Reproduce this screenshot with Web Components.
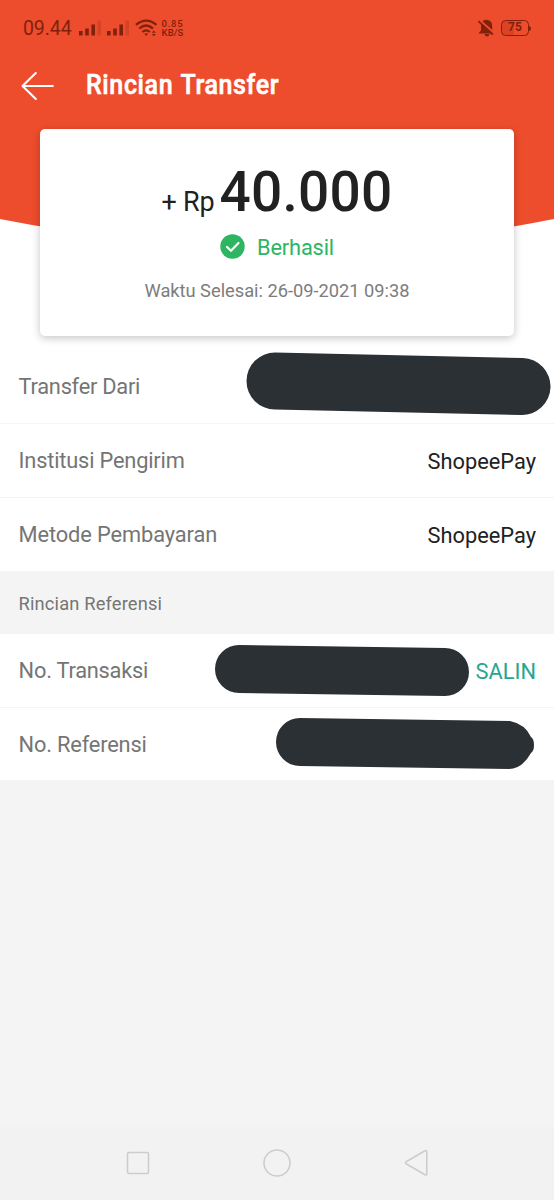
<!DOCTYPE html>
<html lang="id">
<head>
<meta charset="utf-8">
<title>Rincian Transfer</title>
<style>
body{margin:0;background:#f4f4f4;font-family:Roboto,"Noto Sans",sans-serif}
</style>
</head>
<body>
<transfer-page></transfer-page>
<script>
const define = (name, html, after) => customElements.define(name, class extends HTMLElement {
  constructor(){
    super();
    const t = document.createElement('template');
    t.innerHTML = html;
    this.attachShadow({mode:'open'}).append(t.content.cloneNode(true));
  }
  connectedCallback(){ if (after) after(this); }
});

/* Tracks its text so that the line takes the width given in "w". */
define('fit-text', `<style>:host{display:inline-block;white-space:pre;line-height:1}</style><slot></slot>`, el => {
  const probe = document.createElement('canvas').getContext('2d');
  const s = getComputedStyle(el);
  probe.font = `${s.fontWeight} ${s.fontSize} ${s.fontFamily}`;
  const text = el.textContent, w = +el.getAttribute('w');
  const gap = parseFloat(s.wordSpacing) || 0;
  const natural = probe.measureText(text).width + gap * (text.split(' ').length - 1);
  el.style.letterSpacing = ((w - natural) / text.length).toFixed(3) + 'px';
  el.style.width = w + 'px';
});

define('status-bar', `<style>
:host{display:flex;height:56px;box-sizing:border-box;padding:0 23px 0 23px;align-items:center;color:#81210c}
.time{font-size:19.500px;margin:2px 7px 0 0}
svg{display:block;fill:currentColor}
.sig{margin-right:6px}
.rate{display:flex;flex-direction:column;font-size:9.500px;font-weight:500;margin:0 0 0 4px}
.end{margin-left:auto;display:flex;align-items:center}
.bat{width:28px;height:16px;box-sizing:border-box;border:1.600px solid;border-radius:4.500px;font-size:12px;font-weight:700;line-height:13.500px;text-align:center;background:linear-gradient(90deg,#dc4325 45%,transparent 45%)}
</style>
<fit-text class="time" w="48.5">09.44</fit-text>
<svg class="sig" width="22" height="16"><path d="M0 11h3.6v4.5H0zM6.2 8.5h3.6v7H6.200zM12.400 4.500h3.600v11h-3.600z"/><path opacity=".22" d="M18.500 0.500h3.500v15h-3.500z"/></svg>
<svg class="sig" width="22" height="16"><path d="M0 11h3.6v4.5H0zM6.2 8.5h3.6v7H6.200zM12.400 4.500h3.600v11h-3.600z"/><path opacity=".22" d="M18.500 0.500h3.500v15h-3.500z"/></svg>
<svg width="23" height="18" viewBox="0 0 23 18"><g fill="none" stroke="currentColor" stroke-width="2.300"><path d="M1 5.800Q11 -2.600 21.500 5.800"/><path d="M4.300 9.500Q11 3.600 18 9.500"/><path d="M7.500 13Q11 9.700 14.800 13"/></g><path d="M9.200 14.600h4L11.200 17zM16.800 13.800l2-2.200 2 2.200zM16.800 15l2 2.200 2-2.200z"/></svg>
<div class="rate"><fit-text w="22">0.85</fit-text><fit-text w="22">KB/S</fit-text></div>
<div class="end"><svg width="18" height="18" viewBox="0 0 18 18" style="margin-right:5px"><path d="M4 2.500Q6 .8 8.500 .8 14 1.200 14.200 6.500v5l2 2.300v.7H1v-.7L3 11.500V6.500Q3 4 4 2.500zM6.500 15h5Q11 17.500 9 17.500 7 17.500 6.500 15z"/><path d="M1 .5L17 14.800" stroke="#ee4d2d" stroke-width="2"/><path d="M.3 2L14.800 15.600" stroke="currentColor" stroke-width="1.700"/></svg>
<div class="bat">75</div><svg width="2" height="5"><path d="M0 0q2 .4 2 2.500T0 5z"/></svg></div>`);

define('title-bar', `<style>
:host{display:flex;height:73px;box-sizing:border-box;padding:14px 0 0 21px;align-items:flex-start;color:#fff}
svg{display:block;margin:1px 31px 0 0}
fit-text{font-size:27.500px;font-weight:500;-webkit-text-stroke:.6px #fff;margin-top:1px;word-spacing:1px;transform:scaleX(.91);transform-origin:0 0}
</style>
<svg width="34" height="30" viewBox="0 0 34 30" fill="none" stroke="#fff" stroke-width="2.100" stroke-linecap="round" stroke-linejoin="round"><path d="M31.800 15H1.500M14.800 2L1.500 15l13.300 13"/></svg>
<fit-text w="213">Rincian Transfer</fit-text>`);

define('amount-card', `<style>
:host{display:flex;flex-direction:column;align-items:center;box-sizing:border-box;width:474px;height:207px;margin:0 auto;background:#fff;border-radius:5px;box-shadow:0 2px 8px rgba(0,0,0,.24);position:relative}
.sum{display:flex;align-items:baseline;color:#212121;margin-top:36px}
.cur{font-size:27px;margin-right:5px}
.num{font-size:55px;font-weight:500}
.state{display:flex;align-items:center;color:#2eb562;font-size:21.800px;margin-top:14px}
.state svg{margin-right:12px}
.state fit-text{margin-top:2px}
.date{font-size:18.300px;color:#7d7d7d;margin-top:23px}
</style>
<div class="sum"><fit-text class="cur" w="53">+ Rp</fit-text><fit-text class="num" w="173">40.000</fit-text></div>
<div class="state"><svg width="25" height="25" viewBox="0 0 25 25"><circle cx="12.500" cy="12.500" r="12.200" fill="#2eb562"/><path d="M7 13l4 3.800 7.500-7.800" fill="none" stroke="#fff" stroke-width="2.200" stroke-linecap="round" stroke-linejoin="round"/></svg><fit-text w="77">Berhasil</fit-text></div>
<fit-text class="date" w="265">Waktu Selesai: 26-09-2021 09:38</fit-text>`);

define('detail-row', `<style>
:host{display:flex;height:74px;box-sizing:border-box;padding:0 18px;align-items:center;justify-content:space-between;border-bottom:1.500px solid #f4f4f4;font-size:21.800px;color:#757575}
:host([last]){height:73px;border:0}
.val{color:#212121;display:flex;align-items:center;padding-top:3px}
</style><slot name="label"></slot><div class="val"><slot></slot></div>`);

/* Hand-drawn marker stroke that hides a private value. */
define('redacted-value', `<style>:host{display:block}svg{display:block;overflow:visible}</style><svg><path fill="#2b3034"/></svg>`, el => {
  const svg = el.shadowRoot.querySelector('svg');
  svg.setAttribute('width', el.getAttribute('w'));
  svg.setAttribute('height', el.getAttribute('h'));
  svg.firstElementChild.setAttribute('d', el.getAttribute('d'));
});

define('section-title', `<style>:host{display:flex;height:63px;box-sizing:border-box;padding:4px 18px 0;align-items:center;background:#f4f4f4;color:#757575;font-size:18.300px}</style><slot></slot>`);

define('nav-bar', `<style>:host{display:flex;height:75px;background:#f2f2f2;align-items:center;justify-content:space-between;padding:0 126px;box-sizing:border-box}svg{display:block;fill:none;stroke:#cdcdcd;stroke-width:1.600;stroke-linejoin:round}</style>
<svg width="24" height="24"><rect x="1.500" y="1.500" width="21" height="21" rx="1.500"/></svg>
<svg width="28" height="28"><circle cx="14" cy="14" r="13"/></svg>
<svg width="24" height="28"><path d="M2.500 12.500L21 1.700Q22.800 1 22.800 3V24.500Q22.800 26.500 21 25.700L2.500 15Q.5 13.700 2.500 12.500z"/></svg>`);

define('transfer-page', `<style>
:host{display:flex;flex-direction:column;height:1200px;width:554px;background:#f4f4f4;overflow:hidden}
.hero{height:350px;background:#fff;position:relative}
.wave{position:absolute;left:0;top:0;display:block}
.over{position:relative}
.list{background:#fff}
nav-bar{margin-top:auto}
.copy{color:#26a690;margin-left:7px}
redacted-value{margin-top:-3px}
fit-text[slot]{margin-left:.6px}
</style>
<div class="hero">
<svg class="wave" width="554" height="250"><path fill="#ee4d2d" d="M0 0H554V219Q277 274 0 219z"/></svg>
<div class="over"><status-bar></status-bar><title-bar></title-bar><amount-card></amount-card></div>
</div>
<div class="list">
<detail-row><fit-text slot="label" w="121.5">Transfer Dari</fit-text><redacted-value style="margin:-9px -15px 0 0" w="306" h="64" d="M30 .5L278 6A28.400 28.400 0 0 1 276 63L30 57.500A28.500 28.500 0 0 1 30 .5z"></redacted-value></detail-row>
<detail-row><fit-text slot="label" w="166">Institusi Pengirim</fit-text><fit-text w="108.5">ShopeePay</fit-text></detail-row>
<detail-row last><fit-text slot="label" w="198.5">Metode Pembayaran</fit-text><fit-text w="108.5">ShopeePay</fit-text></detail-row>
<section-title><fit-text w="143.5" style="margin-left:.6px">Rincian Referensi</fit-text></section-title>
<detail-row><fit-text slot="label" w="130">No. Transaksi</fit-text><redacted-value w="254" h="51" d="M24 0L230 3A24 24 0 0 1 230 51L24 48A24 24 0 0 1 24 0z"></redacted-value><fit-text class="copy" w="60.5">SALIN</fit-text></detail-row>
<detail-row last style="height:72px;padding-top:1px"><fit-text slot="label" w="128">No. Referensi</fit-text><redacted-value style="margin:-5px 2px 0 0" w="258" h="51" d="M24 0L234 3Q249 6 255 19 258 21 258 27 258 33 255 35 246 51 233 51L24 48A24 24 0 0 1 24 0z"></redacted-value></detail-row>
</div>
<nav-bar></nav-bar>`);
</script>
</body>
</html>
